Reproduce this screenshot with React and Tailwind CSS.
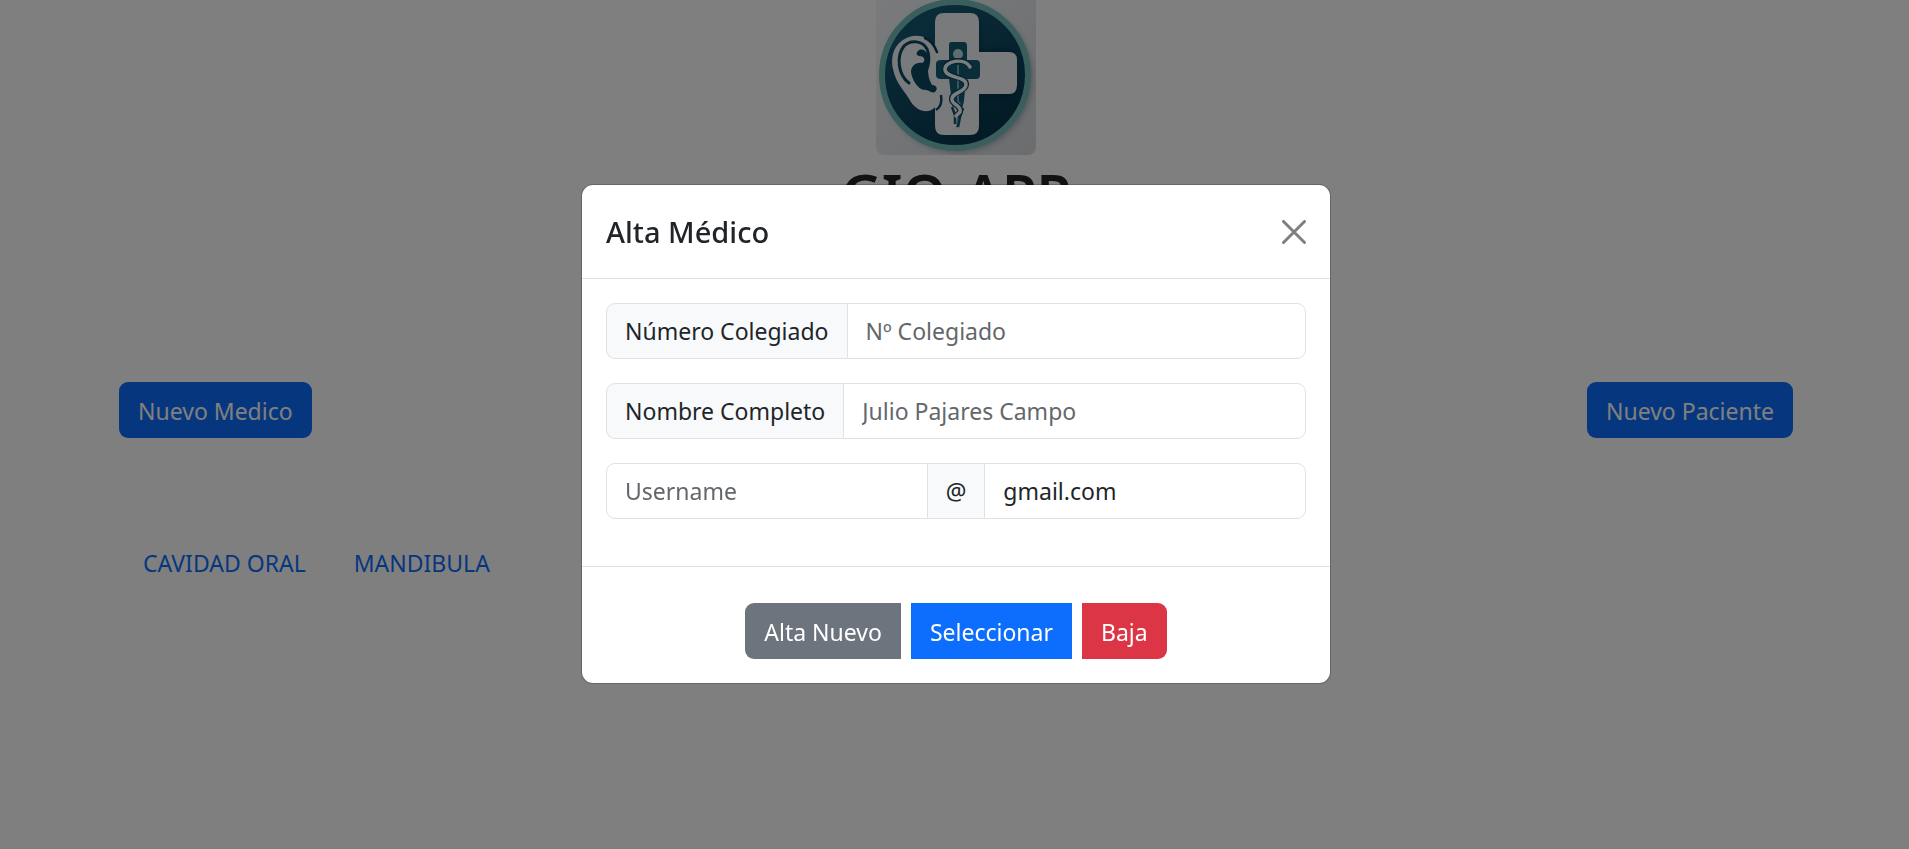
import React, { useId } from 'react';

const btn = 'border-0 px-[19px] pt-[11px] pb-[9px] leading-9 whitespace-nowrap cursor-pointer';
const addon = 'flex items-center border border-[#dee2e6] bg-[#f8f9fa] px-[18px] py-[9px] leading-9 whitespace-nowrap';
const field = 'min-w-0 flex-1 border border-[#dee2e6] bg-white px-[18px] py-[9px] leading-9 text-[#212529] outline-none placeholder:text-[#63676b]';

function Logo() {
  return (
    <svg viewBox="0 0 160 160" className="size-40 rounded-lg" role="img" aria-label="GIO-APP">
      <defs>
        <linearGradient id="bg" x1="0" y1="0" x2="1" y2="1">
          <stop offset="0" stopColor="#f4f6f8" />
          <stop offset="1" stopColor="#d6dade" />
        </linearGradient>
        <linearGradient id="disc" x1="0.2" y1="0" x2="0.8" y2="1">
          <stop offset="0" stopColor="#175d78" />
          <stop offset="1" stopColor="#043349" />
        </linearGradient>
        <filter id="soft" x="-20%" y="-20%" width="140%" height="140%">
          <feGaussianBlur stdDeviation="3" />
        </filter>
      </defs>
      <rect width="160" height="160" fill="url(#bg)" />
      <circle cx="82" cy="83" r="74" fill="#9aa8b2" filter="url(#soft)" />
      <circle cx="79" cy="80" r="73" fill="url(#disc)" stroke="#74bdb8" strokeWidth="6" />
      <path d="M104 24V55H138V104H104V138H96V24Z" fill="#032f45" opacity="0.6" filter="url(#soft)" />
      <path d="M68 18H94Q103 18 103 27V57H133Q141 57 141 65V90Q141 99 133 99H103V131Q103 140 94 140H68Q59 140 59 131V27Q59 18 68 18Z" fill="#f1f4f6" />
      <path d="M61 57C58 44 45 38 33 42C19 47 14 60 17 74C20 89 29 96 35 107C40 115 50 119 57 114C62 110 64 105 64 101L60 92L64 75Z" fill="#f1f4f6" />
      <path d="M61 57C58 49 54 45 49 43" fill="none" stroke="#0b4059" strokeWidth="2.5" strokeLinecap="round" />
      <path d="M33 88C22 80 20 61 28 51C35 44 47 46 51 54C54 61 53 68 51 74" fill="none" stroke="#0b4961" strokeWidth="3" strokeLinecap="round" />
      <path d="M42 56C45 53 50 55 52 60L52 74C52 80 53 85 56 90C61 90 62 94 59 97C55 99 52 94 48 95C42 94 36 85 35 77C35 71 40 67 46 68C50 66 49 61 43 61C40 60 40 58 42 56Z" fill="#0b4961" />
      <path d="M60 115C65 112 66 106 65 100" fill="none" stroke="#0b4961" strokeWidth="2.5" />
      <path d="M75 47H88Q91 47 91 51V65H100Q104 65 104 69V80Q104 84 100 84H90L88 106L81 134L77 116L73 84H65Q60 84 60 80V69Q60 65 65 65H73V50Q73 47 75 47Z" fill="#135c75" />
      <path d="M79 106L81 116L84 106L85 116L81 134L76 114Z" fill="#f1f4f6" />
      <circle cx="82" cy="59" r="5" fill="#b8dddf" />
      <path d="M82 70V105L83 116L81 132" fill="none" stroke="#69aeb8" strokeWidth="2" />
      <path d="M76 112L79 120V129M87 113L84 122L82 132" fill="none" stroke="#12546d" strokeWidth="2.5" />
      <path d="M94 71C87 62 67 66 69 75C71 84 91 80 90 90C89 98 75 96 76 105C77 110 86 111 84 117L80 121" fill="none" stroke="#0b4961" strokeWidth="6" />
      <path d="M94 72C88 62 68 66 69 75C71 84 91 81 90 90C89 98 75 97 76 105C77 110 86 111 84 117L80 121" fill="none" stroke="#f4f8fa" strokeWidth="3.5" strokeLinecap="round" />
    </svg>
  );
}

function InputRow({ label, placeholder }) {
  const id = useId();
  return (
    <div className="flex">
      <label htmlFor={id} className={addon + ' rounded-l-[9px] border-r-0'}>{label}</label>
      <input id={id} type="text" placeholder={placeholder} className={field + ' rounded-r-[9px]'} />
    </div>
  );
}

function MedicoDialog() {
  return (
    <div className="fixed inset-0 flex items-center justify-center bg-black/50 pt-[19px] pl-[3px]">
      <section role="dialog" aria-modal="true" aria-labelledby="dialog-title" className="w-full max-w-[750px] rounded-xl border border-black/20 bg-white bg-clip-padding">
        <header className="flex items-center justify-between border-b border-[#dee2e6] p-6">
          <h2 id="dialog-title" className="text-[29px] leading-[45px] font-medium">Alta Médico</h2>
          <button type="button" aria-label="Cerrar" className="cursor-pointer">
            <svg viewBox="0 0 24 24" className="size-6" fill="none" stroke="#7f7f7f" strokeWidth="3" strokeLinecap="round">
              <path d="M1.5 1.5L22.5 22.5M22.5 1.5L1.5 22.5" />
            </svg>
          </button>
        </header>
        <form className="flex flex-col gap-6 px-6 pt-6 pb-[47px]">
          <InputRow label="Número Colegiado" placeholder="Nº Colegiado" />
          <InputRow label="Nombre Completo" placeholder="Julio Pajares Campo" />
          <div className="flex">
            <input type="text" aria-label="Username" placeholder="Username" className={field + ' rounded-l-[9px]'} />
            <span className={addon + ' border-x-0'}>@</span>
            <input type="text" aria-label="Server" defaultValue="gmail.com" className={field + ' rounded-r-[9px]'} />
          </div>
        </form>
        <footer className="flex justify-center gap-[10px] border-t border-[#dee2e6] px-6 pt-9 pb-6 text-white">
          <button type="button" className={btn + ' rounded-l-[9px] bg-[#6c757d]'}>Alta Nuevo</button>
          <button type="button" className={btn + ' bg-[#0d6efd]'}>Seleccionar</button>
          <button type="button" className={btn + ' rounded-r-[9px] bg-[#dc3545]'}>Baja</button>
        </footer>
      </section>
    </div>
  );
}

export default function App() {
  return (
    <div className="min-h-screen overflow-hidden bg-white font-['Noto_Sans',sans-serif] text-[23px] text-[#212529]">
      <header className="-mt-[5px] flex flex-col items-center pl-[3px]">
        <Logo />
        <h1 className="mt-1 text-[56px] leading-[68px] font-semibold">GIO-APP</h1>
      </header>
      <main className="pt-[155px] pr-[116px] pl-[119px]">
        <div className="flex justify-between">
          <button type="button" className={btn + ' rounded-[9px] bg-[#0d6efd] text-white'}>Nuevo Medico</button>
          <button type="button" className={btn + ' rounded-[9px] bg-[#0d6efd] text-white'}>Nuevo Paciente</button>
        </div>
        <nav className="mt-[95px] flex gap-12 px-6 py-3 leading-9 text-[#0d6efd]">
          <a href="#cavidad-oral">CAVIDAD ORAL</a>
          <a href="#mandibula">MANDIBULA</a>
        </nav>
      </main>
      <MedicoDialog />
    </div>
  );
}
